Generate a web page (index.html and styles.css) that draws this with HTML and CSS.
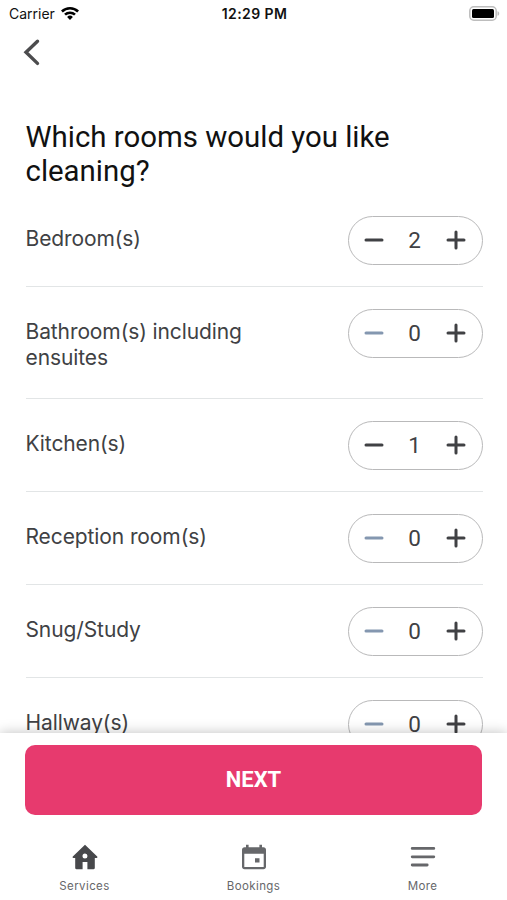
FILE: index.html
```html
<!DOCTYPE html>
<html lang="en">
<head>
    <meta charset="utf-8">
    <title>Rooms</title>
    <meta name="viewport" content="width=device-width, initial-scale=1">
    <link rel="stylesheet" href="styles.css">
</head>
<body>

<div class="screen">
    <header class="status">
        <div class="status-left">
            <span class="carrier">Carrier</span>
            <svg class="wifi" viewBox="0 0 18 14"><path d="M0 4.6a12.8 12.8 0 0 1 18 0L16.2 6.5a10.2 10.2 0 0 0-14.4 0zM3.1 7.8a8.4 8.4 0 0 1 11.8 0L13.1 9.6a5.8 5.8 0 0 0-8.2 0zM6.1 10.9a4.1 4.1 0 0 1 5.8 0L9 13.9z"/></svg>
        </div>
        <span class="clock">12:29 PM</span>
        <div class="status-right">
            <svg class="battery" viewBox="0 0 31 15"><rect x=".8" y=".8" width="26.4" height="13.4" rx="4" fill="#fff" stroke="#bdbdbd" stroke-width="1.5"/><rect x="3" y="3" width="22" height="9" rx="1.5"/><path d="M28.5 5.2c2.3.7 2.3 3.9 0 4.6z" fill="#bdbdbd"/></svg>
        </div>
    </header>

    <nav class="topbar">
        <svg class="back" viewBox="0 0 18 28"><path d="M14.5 3.2 3 14.2l11.500 11.200"/></svg>
    </nav>

    <main class="content">
        <h1>Which rooms would you like cleaning?</h1>
        <ul class="rooms">
            <li class="room">
                <span class="label">Bedroom(s)</span>
                <div class="stepper">
                    <svg viewBox="0 0 20 20"><path d="M2 10h16"/></svg>
                    <span>2</span>
                    <svg viewBox="0 0 20 20"><path d="M2 10h16M10 2v16"/></svg>
                </div>
            </li>
            <li class="room">
                <span class="label">Bathroom(s) including ensuites</span>
                <div class="stepper">
                    <svg class="off" viewBox="0 0 20 20"><path d="M2 10h16"/></svg>
                    <span>0</span>
                    <svg viewBox="0 0 20 20"><path d="M2 10h16M10 2v16"/></svg>
                </div>
            </li>
            <li class="room">
                <span class="label">Kitchen(s)</span>
                <div class="stepper">
                    <svg viewBox="0 0 20 20"><path d="M2 10h16"/></svg>
                    <span>1</span>
                    <svg viewBox="0 0 20 20"><path d="M2 10h16M10 2v16"/></svg>
                </div>
            </li>
            <li class="room">
                <span class="label">Reception room(s)</span>
                <div class="stepper">
                    <svg class="off" viewBox="0 0 20 20"><path d="M2 10h16"/></svg>
                    <span>0</span>
                    <svg viewBox="0 0 20 20"><path d="M2 10h16M10 2v16"/></svg>
                </div>
            </li>
            <li class="room">
                <span class="label">Snug/Study</span>
                <div class="stepper">
                    <svg class="off" viewBox="0 0 20 20"><path d="M2 10h16"/></svg>
                    <span>0</span>
                    <svg viewBox="0 0 20 20"><path d="M2 10h16M10 2v16"/></svg>
                </div>
            </li>
            <li class="room">
                <span class="label">Hallway(s)</span>
                <div class="stepper">
                    <svg class="off" viewBox="0 0 20 20"><path d="M2 10h16"/></svg>
                    <span>0</span>
                    <svg viewBox="0 0 20 20"><path d="M2 10h16M10 2v16"/></svg>
                </div>
            </li>
        </ul>
    </main>

    <footer class="bottom">
        <button class="next" type="button">NEXT</button>
        <nav class="tabs">
            <a class="tab active">
                <svg viewBox="0 0 26 26"><path fill-rule="evenodd" d="M13 .8 25.200 12.500c.5.6.2 1.500-.6 1.500h-1.800v10c0 .7-.5 1.200-1.200 1.200h-6.200v-7.200h-4.800v7.200H4.400c-.7 0-1.200-.5-1.200-1.200V14H1.400c-.8 0-1.100-.9-.6-1.500zM13 9.400a2.500 2.500 0 1 0 0 5 2.500 2.500 0 0 0 0-5z"/></svg>
                <span>Services</span>
            </a>
            <a class="tab">
                <svg viewBox="0 0 26 26"><path fill-rule="evenodd" d="M5 .8h2.600v2.400h10.800V.8H21v2.400h1.500c1.400 0 2.500 1.100 2.500 2.500v17c0 1.400-1.100 2.500-2.500 2.500h-19C2.100 25.200 1 24.100 1 22.700v-17c0-1.400 1.100-2.500 2.500-2.500H5zM3.300 9.800v13.100h19.400V9.800zM14 14.300h4.500v4.200H14z"/></svg>
                <span>Bookings</span>
            </a>
            <a class="tab">
                <svg viewBox="0 0 26 26"><path class="lines" d="M2.200 4.400h21.600M2.200 12.800h21.600M2.200 21h15"/></svg>
                <span>More</span>
            </a>
        </nav>
    </footer>
</div>

</body>
</html>
```
FILE: styles.css
```css
* {
    box-sizing: border-box;
}
body {
    margin: 0;
    background: #fff;
    color: #404144;
    font-family: Inter, "Liberation Sans", sans-serif;
}
.screen {
    display: flex;
    flex-direction: column;
    height: 900px;
    overflow: hidden;
}

/* status bar */
.status {
    display: grid;
    grid-template-columns: 1fr auto 1fr;
    align-items: center;
    height: 27px;
    padding: 0 7px 0 9px;
    color: #111;
    font-size: 14px;
}
.status-left {
    display: flex;
    align-items: center;
    gap: 6px;
}
.wifi {
    width: 18px;
    height: 14px;
    margin-bottom: 2px;
}
.clock {
    font-weight: 600;
    letter-spacing: .4px;
}
.status-right {
    display: flex;
    justify-content: flex-end;
}
.battery {
    width: 31px;
    height: 15px;
    margin-bottom: 1px;
}

.topbar {
    height: 54px;
    padding: 11px 0 0 23px;
}
.back {
    display: block;
    width: 18px;
    height: 28px;
    fill: none;
    stroke: #4c4c4e;
    stroke-width: 3.4;
    stroke-linecap: round;
}

/* room list */
.content {
    flex: 1;
    min-height: 0;
    padding: 39px 24.5px 0 25.5px;
    overflow: hidden;
}
h1 {
    margin: 0 0 6px;
    color: #111;
    font: 400 29.4px/34px Roboto, sans-serif;
}
.rooms {
    margin: 0;
    padding: 0;
    list-style: none;
}
.room {
    display: flex;
    align-items: flex-start;
    justify-content: space-between;
    padding: 22px 0 21px;
    border-bottom: 1px solid #e2e5e6;
}
.label {
    width: 250px;
    margin: 10px 0 6px;
    font-size: 21px;
    line-height: 26px;
    letter-spacing: -.1px;
}
.stepper {
    display: flex;
    align-items: center;
    justify-content: space-between;
    width: 135px;
    height: 49px;
    padding: 0 16px 1px 15px;
    border: 1px solid #b9b9ba;
    border-radius: 25px;
    font: 400 22.5px/26px Roboto, sans-serif;
}
.stepper svg {
    width: 20px;
    height: 20px;
    fill: none;
    stroke: #404144;
    stroke-width: 3;
    stroke-linecap: round;
}
.stepper .off {
    stroke: #8497b0;
}

/* bottom bar */
.bottom {
    z-index: 1;
    height: 167px;
    padding: 12px 25px 0;
    background: #fff;
    box-shadow: 0 0 12px rgba(0, 0, 0, .25);
}
.next {
    display: block;
    width: 100%;
    height: 70px;
    padding: 0 0 2px;
    border: 0;
    border-radius: 10px;
    background: #e73a6e;
    color: #fff;
    font: 700 22px Roboto, sans-serif;
}
.tabs {
    display: flex;
    margin: 29px -25px 0;
}
.tab {
    display: flex;
    flex: 1;
    flex-direction: column;
    align-items: center;
    gap: 8px;
    color: #66676a;
    font-size: 11.5px;
    line-height: 16px;
    letter-spacing: .4px;
}
.tab svg {
    width: 26px;
    height: 26px;
    fill: #66676a;
}
.active svg {
    fill: #47484b;
}
.tab .lines {
    fill: none;
    stroke: #66676a;
    stroke-width: 2.8;
    stroke-linecap: round;
}
```
